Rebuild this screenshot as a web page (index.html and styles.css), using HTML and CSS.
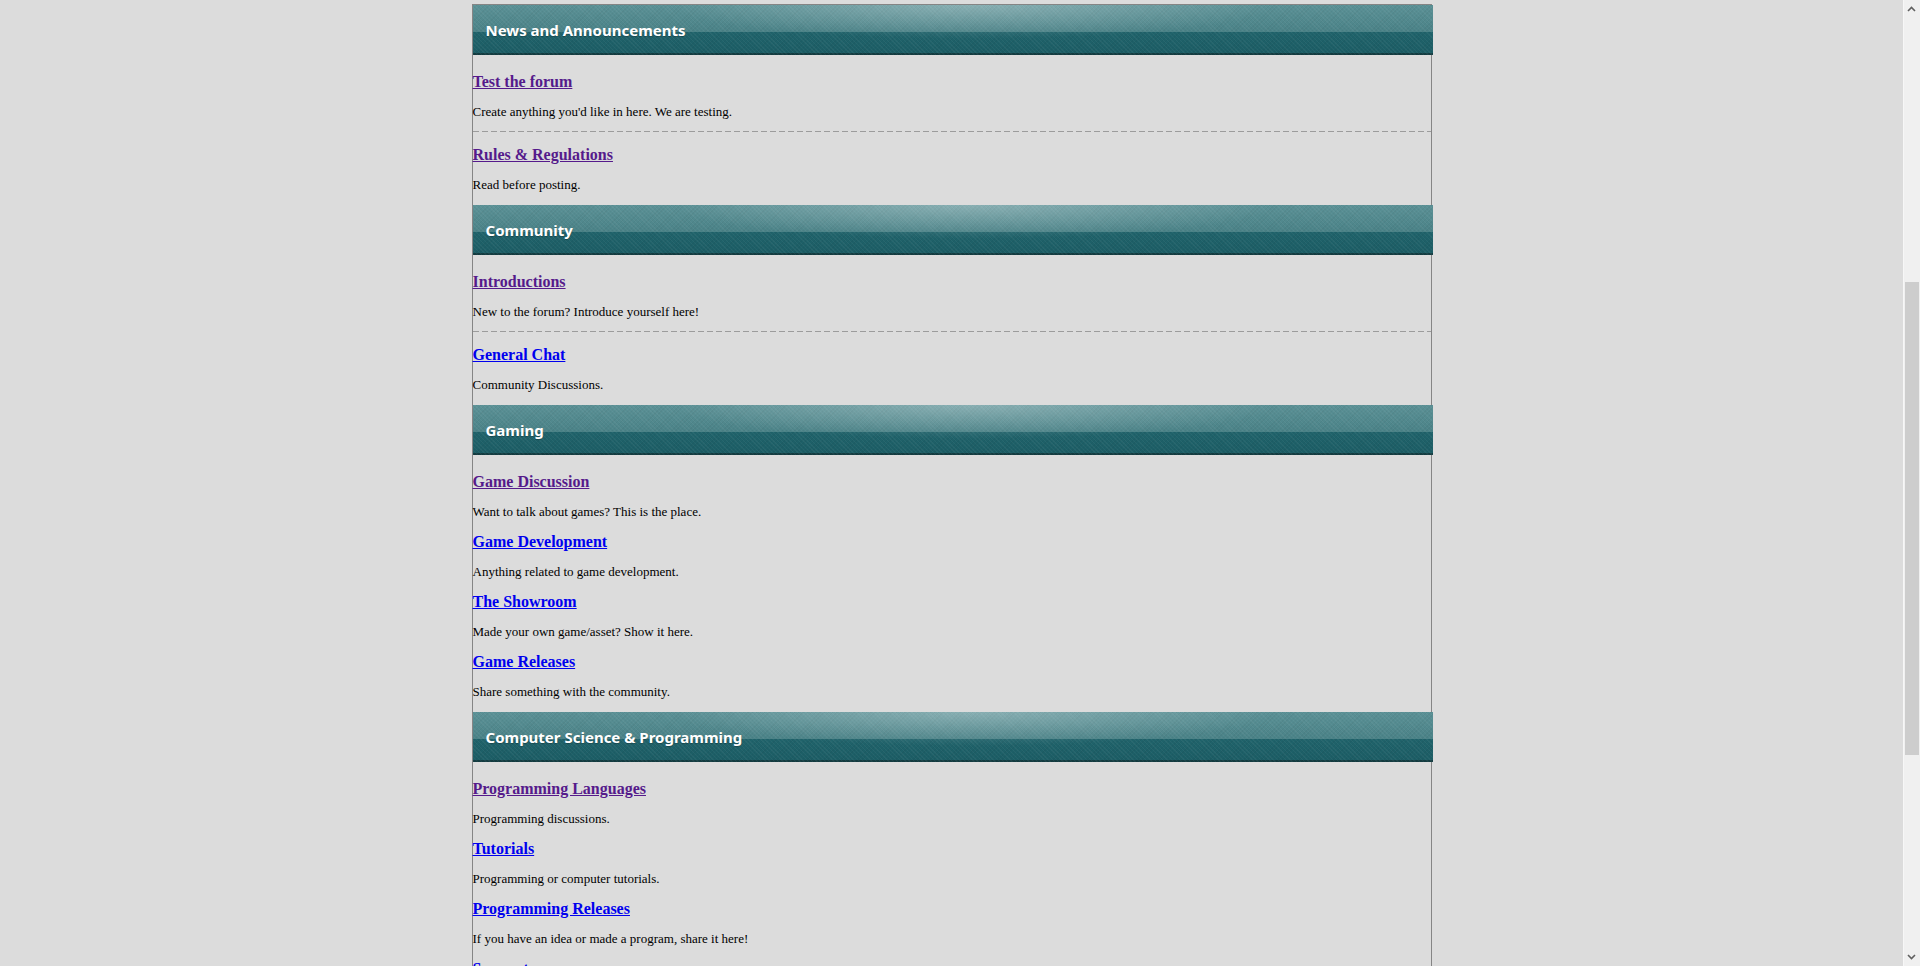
FILE: index.html
```html
<!DOCTYPE html>
<html lang="en">
<head>
<meta charset="utf-8">
<title>Forum</title>
<link rel="stylesheet" href="styles.css">
</head>
<body>
<main class="board">
  <section class="cat">
    <h2 class="cat-head">News and Announcements</h2>
    <div class="forums">
      <div class="forum sep">
        <a class="forum-title visited" href="#">Test the forum</a>
        <p class="forum-desc">Create anything you'd like in here. We are testing.</p>
      </div>
      <div class="forum">
        <a class="forum-title visited" href="#">Rules &amp; Regulations</a>
        <p class="forum-desc">Read before posting.</p>
      </div>
    </div>
  </section>
  <section class="cat">
    <h2 class="cat-head">Community</h2>
    <div class="forums">
      <div class="forum sep">
        <a class="forum-title visited" href="#">Introductions</a>
        <p class="forum-desc">New to the forum? Introduce yourself here!</p>
      </div>
      <div class="forum">
        <a class="forum-title" href="#">General Chat</a>
        <p class="forum-desc">Community Discussions.</p>
      </div>
    </div>
  </section>
  <section class="cat">
    <h2 class="cat-head">Gaming</h2>
    <div class="forums">
      <div class="forum">
        <a class="forum-title visited" href="#">Game Discussion</a>
        <p class="forum-desc">Want to talk about games? This is the place.</p>
      </div>
      <div class="forum">
        <a class="forum-title" href="#">Game Development</a>
        <p class="forum-desc">Anything related to game development.</p>
      </div>
      <div class="forum">
        <a class="forum-title" href="#">The Showroom</a>
        <p class="forum-desc">Made your own game/asset? Show it here.</p>
      </div>
      <div class="forum">
        <a class="forum-title" href="#">Game Releases</a>
        <p class="forum-desc">Share something with the community.</p>
      </div>
    </div>
  </section>
  <section class="cat">
    <h2 class="cat-head">Computer Science &amp; Programming</h2>
    <div class="forums">
      <div class="forum">
        <a class="forum-title visited" href="#">Programming Languages</a>
        <p class="forum-desc">Programming discussions.</p>
      </div>
      <div class="forum">
        <a class="forum-title" href="#">Tutorials</a>
        <p class="forum-desc">Programming or computer tutorials.</p>
      </div>
      <div class="forum">
        <a class="forum-title" href="#">Programming Releases</a>
        <p class="forum-desc">If you have an idea or made a program, share it here!</p>
      </div>
      <div class="forum">
        <a class="forum-title" href="#">Support</a>
        <p class="forum-desc">Get help with your code.</p>
      </div>
    </div>
  </section>
</main>
<div class="scrollbar" aria-hidden="true">
  <svg class="sb-arrow" width="17" height="17" viewBox="0 0 17 17"><path d="M5 11 L8.5 7.5 L12 11" fill="none" stroke="#606060" stroke-width="1.6"/></svg>
  <div class="sb-track"><div class="sb-thumb"></div></div>
  <svg class="sb-arrow" width="17" height="17" viewBox="0 0 17 17"><path d="M5 6 L8.5 9.5 L12 6" fill="none" stroke="#606060" stroke-width="1.6"/></svg>
</div>
</body>
</html>
```

FILE: styles.css
```css
html {
  background: #dcdcdc;
}
body {
  margin: 0;
  padding-right: 17px;
  background: #dcdcdc;
  font-family: "Liberation Serif", "Times New Roman", serif;
  color: #000;
}
.board {
  box-sizing: border-box;
  width: 960px;
  margin: 4px auto 0;
  border: 1px solid #858585;
  border-bottom: 0;
  padding-bottom: 40px;
}
.cat-head {
  box-sizing: border-box;
  width: 960px;
  height: 50px;
  margin: 0;
  padding: 0 0 0 13px;
  font-family: "Noto Sans", "Open Sans", sans-serif;
  font-weight: 700;
  font-size: 15px;
  line-height: 50px;
  color: #fff;
  background:
    radial-gradient(ellipse 300px 34px at 52% 0, rgba(255,255,255,0.28), rgba(255,255,255,0) 100%),
    repeating-linear-gradient(45deg, rgba(255,255,255,0.045) 0 1px, rgba(255,255,255,0) 1px 3px),
    repeating-linear-gradient(-45deg, rgba(0,0,0,0.04) 0 1px, rgba(0,0,0,0) 1px 3px),
    linear-gradient(to bottom, #5b9196 0, #4a8287 27px, #20636b 27px, #1c5d65 48px, #143f44 48px, #123a3f 50px);
  text-shadow: 0 1px 1px rgba(0,0,0,0.25);
}
.forums {
  padding: 4px 0 13px;
}
.forum {
  padding-top: 14px;
}
.forum.sep {
  padding-bottom: 13px;
  background: repeating-linear-gradient(to right, #9c9c9c 0 6px, rgba(0,0,0,0) 6px 9px) left bottom / 100% 1px no-repeat;
}
.forum-title {
  display: inline-block;
  font-weight: 700;
  font-size: 16px;
  line-height: 18px;
  color: #0000ee;
  text-decoration: underline;
}
.forum-title.visited {
  color: #551a8b;
}
.forum-desc {
  margin: 13px 0 0;
  font-size: 13px;
  line-height: 15px;
}
.scrollbar {
  position: fixed;
  top: 0;
  right: 0;
  width: 17px;
  height: 100vh;
  display: flex;
  flex-direction: column;
  background: #f0f0f0;
  box-shadow: inset 1px 0 0 #f7f7f7;
}
.sb-arrow {
  display: block;
  flex: 0 0 17px;
}
.sb-track {
  flex: 1 1 auto;
}
.sb-thumb {
  margin: 265px 1px 0 2px;
  height: 473px;
  background: #cdcdcd;
}
```
